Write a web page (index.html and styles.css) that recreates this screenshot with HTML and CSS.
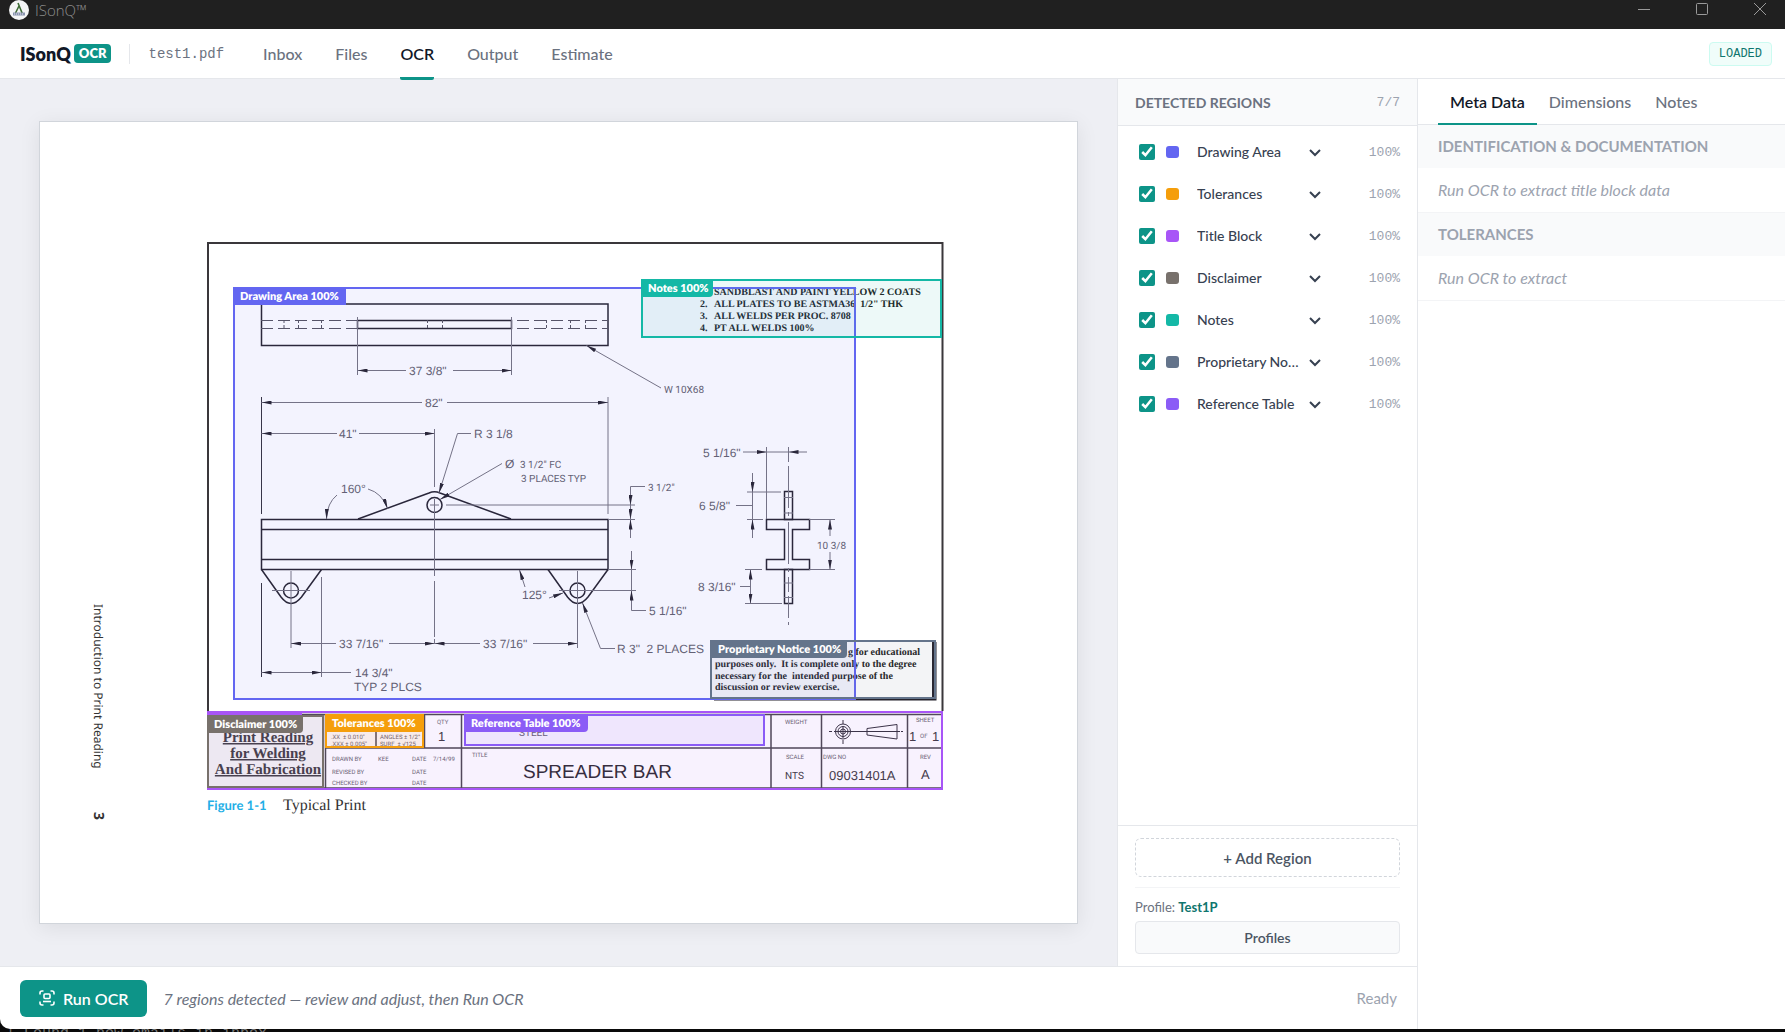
FILE: index.html
```html
<!DOCTYPE html>
<html lang="en">
<head>
  <meta charset="UTF-8" />
  <meta name="viewport" content="width=device-width, initial-scale=1.0"/>
  <title>ISonQ™</title>
  <link rel="stylesheet" href="styles.css">
</head>
<body>
  <div class="window">
    <div class="titlebar">
      <svg class="app-icon" viewBox="0 0 20 20" aria-hidden="true">
        <circle cx="10" cy="10" r="10" fill="#f4f5f6"/>
        <path d="M9 3l4.500 11M10 6L6.500 13" stroke="#3d6b35" stroke-width="1.600" fill="none"/>
        <path d="M4 12.500h12v3H4z" fill="#8b95b0"/>
        <path d="M5 14h10" stroke="#dfe3ec" stroke-dasharray="1 1"/>
      </svg>
      <span class="app-name">ISonQ™</span>
      <div class="window-controls">
        <button aria-label="Minimize"><svg viewBox="0 0 14 14"><path d="M1 7.500h12"/></svg></button>
        <button aria-label="Maximize"><svg viewBox="0 0 14 14"><rect x="1.500" y="1.500" width="11" height="11" rx="1"/></svg></button>
        <button aria-label="Close"><svg viewBox="0 0 14 14"><path d="M1 1l12 12M13 1L1 13"/></svg></button>
      </div>
    </div>

    <header class="header">
      <div class="brand">ISonQ<span class="brand-tag">OCR</span></div>
      <span class="file-name">test1.pdf</span>
      <nav class="nav">
        <a href="#inbox">Inbox</a>
        <a href="#files">Files</a>
        <a href="#ocr" class="active">OCR</a>
        <a href="#output">Output</a>
        <a href="#estimate">Estimate</a>
      </nav>
      <span class="status-badge">LOADED</span>
    </header>

    <div class="body">
      <div class="workspace">
        <div class="work-top">
          <main class="canvas">
            <div class="page">
              <svg class="drawing" viewBox="40 122 1037 801" role="img" aria-label="Spreader bar drawing with detected regions">
                <defs>
                  <marker id="arrow" viewBox="0 0 10 4" refX="10" refY="2" markerWidth="10" markerHeight="4" markerUnits="userSpaceOnUse" orient="auto-start-reverse">
                    <path d="M0 0L10 2L0 4z" fill="#25222c"/>
                  </marker>
                </defs>

                <!-- sheet border -->
                <path class="frame" d="M208 711V243H942.500V711"/>

                <!-- top view -->
                <g class="solid">
                  <rect x="261.500" y="304" width="346.500" height="41.500"/>
                  <rect x="357.500" y="320.500" width="154" height="8"/>
                </g>
                <g class="hidden-line">
                  <path d="M261 320.500H357M261 328.500H357M517 320.500H608M517 328.500H608"/>
                </g>
                <path class="short-dash" d="M284 320V329M298.500 320V329M321.500 320V329M427.500 320V329M442.500 320V329M546.500 320V329M570.500 320V329M585.500 320V329"/>

                <!-- front view -->
                <g class="solid">
                  <rect x="261.500" y="519.500" width="346.500" height="50"/>
                  <path d="M261 529.500H608M261 559.500H608"/>
                  <path d="M358 519L429 493Q434.500 490.500 440 493L511 519"/>
                  <path d="M261.500 569.500L281 597Q291 610 301.500 597L321.500 569.500"/>
                  <path d="M548 569.500L567.500 597Q577.500 610 588 597L608 569.500"/>
                  <circle cx="434.500" cy="505" r="7.500"/>
                  <circle cx="291" cy="590.500" r="7.500"/>
                  <circle cx="577.500" cy="590.500" r="7.500"/>
                </g>
                <g class="thin">
                  <path d="M357.500 317V375M511.500 317V375"/>
                  <path class="dark" d="M261.500 397V514M261.500 583V677"/>
                  <path d="M608 397V514M434.500 429V487M434.500 499V576M434.500 581V637M434.500 639V644"/>
                  <path d="M430 505H439M446 505H635M608 519.500H635M608 569.500H636"/>
                  <path d="M272 590.500H310M291 571V648M559 590.500H636M577.500 571V648M321.500 577V677"/>
                </g>

                <!-- section view -->
                <g class="solid">
                  <path d="M766.500 519.500H809.500V529.500H792.500V559.500H809.500V569.500H766.500V559.500H784.500V529.500H766.500z"/>
                  <rect x="784.500" y="491.500" width="8" height="28"/>
                  <rect x="784.500" y="569.500" width="8" height="34"/>
                </g>
                <g class="thin">
                  <path d="M784 497.500H793M784 513H793M784 583H793M784 597.500H793"/>
                  <path d="M788.500 447V462M788.500 466V508M788.500 512V516M788.500 522V564M788.500 568V572M788.500 577V592M788.500 596V618M788.500 622V625"/>
                  <path d="M766.500 447V519M747 492H781M747 519.500H763M809 519.500H835M809 569.500H835M745 569.500H762M745 603.500H782"/>
                </g>

                <!-- dimension lines -->
                <g class="dim">
                  <path d="M406 370.500H357.500"/>
                  <path d="M453 370.500H511.500"/>
                  <path d="M422 402.500H261.500"/>
                  <path d="M447 402.500H608"/>
                  <path d="M337 433.500H261.500"/>
                  <path d="M359 433.500H434.500"/>
                  <path d="M471 433.500H457.500L439 493"/>
                  <path d="M502 463.500L440 499.500"/>
                  <path d="M368 489Q382 493 387.500 508.500"/>
                  <path d="M337 495Q327 503 326.500 519"/>
                  <path d="M661 388L586.500 345.500"/>
                  <path d="M645 486.500H630.500V505"/>
                  <path d="M630.500 505V519"/>
                  <path d="M630.500 538V519.500"/>
                  <path d="M631.500 551V569.500"/>
                  <path d="M646 610.500H631.500V590.500"/>
                  <path d="M525 587L519.500 570"/>
                  <path d="M549 598L563 593"/>
                  <path d="M615 648.500H600.500L582.500 603"/>
                  <path d="M336 643.500H291"/>
                  <path d="M389 643.500H434.500"/>
                  <path d="M480 643.500H434.500"/>
                  <path d="M533 643.500H577.500"/>
                  <path d="M351 672.500H261.500"/>
                  <path d="M300 672.500H321.500"/>
                  <path d="M743 452H766.500"/>
                  <path d="M807 452H788.500"/>
                  <path d="M752.500 473V492"/>
                  <path d="M752.500 538V519.500"/>
                  <path d="M830 536V519.500"/>
                  <path d="M830 552V569.500"/>
                  <path d="M750.500 586V569.500"/>
                  <path d="M750.500 586V603.500"/>
                </g>
                <path class="thin" d="M766 452H789M736 505.500H752.500M752.500 492V520M740 586.500H750.500M631.500 569V591"/>

                <!-- dimension text -->
                <g class="dim-text">
                  <text x="409" y="375">37 3/8"</text>
                  <text x="425" y="407">82"</text>
                  <text x="339" y="438">41"</text>
                  <text x="474" y="438">R 3 1/8</text>
                  <text x="505" y="468">Ø</text>
                  <text x="341" y="493">160°</text>
                  <text x="522" y="599">125°</text>
                  <text x="339" y="648">33 7/16"</text>
                  <text x="483" y="648">33 7/16"</text>
                  <text x="355" y="677">14 3/4"</text>
                  <text x="354" y="691">TYP 2 PLCS</text>
                  <text x="617" y="653">R 3"&#160; 2 PLACES</text>
                  <text x="649" y="615">5 1/16"</text>
                  <text x="703" y="457">5 1/16"</text>
                  <text x="699" y="510">6 5/8"</text>
                  <text x="698" y="591">8 3/16"</text>
                </g>
                <g class="dim-text narrow">
                  <text x="520" y="468">3 1/2" FC</text>
                  <text x="521" y="482">3 PLACES TYP</text>
                  <text x="664" y="393">W 10X68</text>
                  <text x="648" y="491">3 1/2"</text>
                  <text x="817" y="549">10 3/8</text>
                </g>

                <!-- general notes -->
                <g class="note-text">
                  <text x="714" y="295">SANDBLAST AND PAINT YELLOW 2 COATS</text>
                  <text x="700" y="307">2.</text><text x="714" y="307">ALL PLATES TO BE ASTMA36&#160; 1/2" THK</text>
                  <text x="700" y="319">3.</text><text x="714" y="319">ALL WELDS PER PROC. 8708</text>
                  <text x="700" y="331">4.</text><text x="714" y="331">PT ALL WELDS 100%</text>
                </g>

                <!-- proprietary notice -->
                <path class="notice-shadow" d="M714 699H935V642"/>
                <path class="notice-edge" d="M933 642V697"/>
                <g class="note-text">
                  <text x="848" y="655">g for educational</text>
                  <text x="715" y="667">purposes only.&#160; It is complete only to the degree</text>
                  <text x="715" y="679">necessary for the&#160; intended purpose of the</text>
                  <text x="715" y="690">discussion or review exercise.</text>
                </g>

                <!-- title block -->
                <path class="table-line" d="M208 714.500H942M325 748H942M208 788H942M325.500 714V788M424.500 714V748M461.500 714V788M771 714V788M821.500 714V788M907.500 714V788M376 731V747"/>
                <g class="course">
                  <text x="268" y="742">Print Reading</text>
                  <text x="268" y="758">for Welding</text>
                  <text x="268" y="774">And Fabrication</text>
                </g>
                <g class="tiny">
                  <text x="331" y="739">.XX&#160; ± 0.010"</text>
                  <text x="331" y="746">.XXX ± 0.005"</text>
                  <text x="380" y="739">ANGLES ± 1/2°</text>
                  <text x="380" y="746">SURF&#160; ± √125</text>
                  <text x="437" y="724">QTY</text>
                  <text x="332" y="761">DRAWN BY</text>
                  <text x="378" y="761">KEE</text>
                  <text x="412" y="761">DATE</text>
                  <text x="433" y="761">7/14/99</text>
                  <text x="332" y="774">REVISED BY</text>
                  <text x="412" y="774">DATE</text>
                  <text x="332" y="785">CHECKED BY</text>
                  <text x="412" y="785">DATE</text>
                  <text x="472" y="757">TITLE</text>
                  <text x="785" y="724">WEIGHT</text>
                  <text x="786" y="759">SCALE</text>
                  <text x="823" y="759">DWG NO</text>
                  <text x="920" y="759">REV</text>
                  <text x="916" y="722">SHEET</text>
                  <text x="920" y="738">OF</text>
                </g>
                <g class="table-text">
                  <text x="438" y="741">1</text>
                  <text x="909" y="741">1</text>
                  <text x="932" y="741">1</text>
                  <text x="829" y="780">09031401A</text>
                  <text x="921" y="779">A</text>
                </g>
                <text class="dim-text narrow" x="519" y="736">STEEL</text>
                <text class="nts" x="785" y="779">NTS</text>
                <text class="part-name" x="523" y="778">SPREADER BAR</text>
                <g class="thin dark">
                  <circle cx="843" cy="731.500" r="7.500"/>
                  <circle cx="843" cy="731.500" r="5"/>
                  <circle cx="843" cy="731.500" r="2.500"/>
                  <path d="M829 731.500H832M834 731.500H900M901 731.500H903M843 720V724M843 726V738M843 740V744"/>
                  <path d="M867 728.500L897 724.500V739L867 735z"/>
                </g>

                <!-- captions -->
                <text class="figure-no" x="207" y="810">Figure 1-1</text>
                <text class="figure-name" x="283" y="810">Typical Print</text>
                <g transform="translate(94 604) rotate(90)">
                  <text class="side-title">Introduction to Print Reading</text>
                  <text class="side-page" x="208">3</text>
                </g>

                <!-- detected regions -->
                <g class="region drawing-area">
                  <rect class="region-box" x="234" y="288" width="621" height="411"/>
                  <path class="region-tab" d="M233 287h113v18h-113z"/>
                  <text x="240" y="300">Drawing Area 100%</text>
                </g>
                <g class="region title-block">
                  <rect class="region-box" x="208" y="712" width="734" height="77"/>
                  <path class="region-tab" d="M207 711h95v14h-95z"/>
                </g>
                <g class="region tolerances">
                  <rect class="region-box" x="326" y="715" width="97" height="32"/>
                  <path class="region-tab" d="M325 714h99v14a4 4 0 0 1-4 4h-95z"/>
                  <text x="332" y="727">Tolerances 100%</text>
                </g>
                <g class="region disclaimer">
                  <rect class="region-box" x="208" y="716" width="115" height="71"/>
                  <path class="region-tab" d="M207 715h96v14a4 4 0 0 1-4 4h-92z"/>
                  <text x="214" y="728">Disclaimer 100%</text>
                </g>
                <g class="region notes">
                  <rect class="region-box" x="642" y="280" width="299" height="57"/>
                  <path class="region-tab" d="M641 279h72v14a4 4 0 0 1-4 4h-68z"/>
                  <text x="648" y="292">Notes 100%</text>
                </g>
                <g class="region proprietary">
                  <rect class="region-box" x="711" y="641" width="224" height="57"/>
                  <path class="region-tab" d="M710 640h137v14a4 4 0 0 1-4 4h-133z"/>
                  <text x="718" y="653">Proprietary Notice 100%</text>
                </g>
                <g class="region reference">
                  <rect class="region-box" x="465" y="715" width="299" height="30"/>
                  <path class="region-tab" d="M464 714h124v14a4 4 0 0 1-4 4h-120z"/>
                  <text x="471" y="727">Reference Table 100%</text>
                </g>
              </svg>
            </div>
          </main>

          <aside class="regions">
            <div class="regions-head">
              <h2>Detected Regions</h2>
              <span class="mono">7/7</span>
            </div>
            <ul class="region-list">
              <li>
                <input type="checkbox" aria-label="Show Drawing Area" checked>
                <span class="swatch drawing-area"></span>
                <span class="type"><select aria-label="Region 1 type"><option>Drawing Area</option></select><svg viewBox="0 0 12 12"><path d="M1 4l5 5 5-5"/></svg></span>
                <span class="mono">100%</span>
              </li>
              <li>
                <input type="checkbox" aria-label="Show Tolerances" checked>
                <span class="swatch tolerances"></span>
                <span class="type"><select aria-label="Region 2 type"><option>Tolerances</option></select><svg viewBox="0 0 12 12"><path d="M1 4l5 5 5-5"/></svg></span>
                <span class="mono">100%</span>
              </li>
              <li>
                <input type="checkbox" aria-label="Show Title Block" checked>
                <span class="swatch title-block"></span>
                <span class="type"><select aria-label="Region 3 type"><option>Title Block</option></select><svg viewBox="0 0 12 12"><path d="M1 4l5 5 5-5"/></svg></span>
                <span class="mono">100%</span>
              </li>
              <li>
                <input type="checkbox" aria-label="Show Disclaimer" checked>
                <span class="swatch disclaimer"></span>
                <span class="type"><select aria-label="Region 4 type"><option>Disclaimer</option></select><svg viewBox="0 0 12 12"><path d="M1 4l5 5 5-5"/></svg></span>
                <span class="mono">100%</span>
              </li>
              <li>
                <input type="checkbox" aria-label="Show Notes" checked>
                <span class="swatch notes"></span>
                <span class="type"><select aria-label="Region 5 type"><option>Notes</option></select><svg viewBox="0 0 12 12"><path d="M1 4l5 5 5-5"/></svg></span>
                <span class="mono">100%</span>
              </li>
              <li>
                <input type="checkbox" aria-label="Show Proprietary Notice" checked>
                <span class="swatch proprietary"></span>
                <span class="type"><select aria-label="Region 6 type"><option>Proprietary Notice</option></select><svg viewBox="0 0 12 12"><path d="M1 4l5 5 5-5"/></svg></span>
                <span class="mono">100%</span>
              </li>
              <li>
                <input type="checkbox" aria-label="Show Reference Table" checked>
                <span class="swatch reference"></span>
                <span class="type"><select aria-label="Region 7 type"><option>Reference Table</option></select><svg viewBox="0 0 12 12"><path d="M1 4l5 5 5-5"/></svg></span>
                <span class="mono">100%</span>
              </li>
            </ul>
            <div class="regions-foot">
              <button class="add-region">+ Add Region</button>
              <div class="profile">
                <p>Profile: <strong>Test1P</strong></p>
                <button class="profiles">Profiles</button>
              </div>
            </div>
          </aside>
        </div>

        <footer class="footer">
          <button class="run">
            <svg viewBox="0 0 16 16" aria-hidden="true">
              <path d="M1 4.500V3a2 2 0 0 1 2-2h1.500M11.500 1H13a2 2 0 0 1 2 2v1.500M15 11.500V13a2 2 0 0 1-2 2h-1.500M4.500 15H3a2 2 0 0 1-2-2v-1.500"/>
              <rect x="5" y="4" width="6" height="4.500" rx="1"/>
              <path d="M4 11.500h8"/>
            </svg>
            Run OCR
          </button>
          <span class="hint">7 regions detected — review and adjust, then Run OCR</span>
          <span class="ready">Ready</span>
        </footer>
      </div>

      <aside class="details">
        <div class="tabs" role="tablist">
          <button role="tab" aria-selected="true" class="active">Meta Data</button>
          <button role="tab" aria-selected="false">Dimensions</button>
          <button role="tab" aria-selected="false">Notes</button>
        </div>
        <section>
          <h3>Identification &amp; Documentation</h3>
          <p>Run OCR to extract title block data</p>
        </section>
        <section>
          <h3>Tolerances</h3>
          <p>Run OCR to extract</p>
        </section>
      </aside>
    </div>
  </div>
  <div class="console">! Found 1 new emails in inbox</div>
</body>
</html>
```
FILE: styles.css
```css
* {
  box-sizing: border-box;
  margin: 0;
  padding: 0;
}

body {
  display: flex;
  flex-direction: column;
  height: 100vh;
  overflow: hidden;
  background-color: #0a0a0a;
  color: #374151;
  font-family: Lato, sans-serif;
  font-size: 14px;
}

button,
select {
  font: inherit;
  color: inherit;
  background: none;
  border: none;
  cursor: pointer;
}

.window {
  flex: 1;
  min-height: 0;
  display: flex;
  flex-direction: column;
  background-color: #fff;
  border-bottom-left-radius: 10px;
  overflow: hidden;
}

.console {
  height: 3px;
  padding-left: 6px;
  overflow: hidden;
  color: #777;
  font-family: "Liberation Mono", monospace;
  font-size: 15px;
  line-height: 10px;
}

/* title bar */
.titlebar {
  display: flex;
  align-items: flex-start;
  height: 29px;
  padding-left: 9px;
  background-color: #202020;
  color: #8c8c8c;
}

.app-icon {
  width: 20px;
  height: 20px;
  margin-right: 6px;
}

.app-name {
  font-family: "Open Sans", sans-serif;
  font-size: 15px;
  font-weight: 300;
  line-height: 20px;
}

.window-controls {
  display: flex;
  gap: 8px;
  margin-left: auto;
}

.window-controls button {
  width: 50px;
  height: 20px;
}

.window-controls svg {
  width: 14px;
  height: 14px;
  fill: none;
  stroke: #9a9a9a;
}

/* header, kept above the canvas so the active tab can overlap its border */
.header {
  position: relative;
  z-index: 1;
  display: flex;
  align-items: center;
  height: 50px;
  padding: 0 13px 0 20px;
  border-bottom: 1px solid #e5e7eb;
}

.brand {
  display: flex;
  align-items: center;
  gap: 3px;
  padding-right: 18px;
  color: #111827;
  font-size: 18px;
  font-weight: 800;
}

.brand-tag {
  padding: 0 5px;
  border-radius: 4px;
  background-color: #0d9488;
  color: #fff;
  font-size: 13px;
  line-height: 19px;
}

.file-name {
  padding: 0 39px 0 18px;
  border-left: 1px solid #e5e7eb;
  color: #6b7280;
  font-family: "Liberation Mono", monospace;
  font-size: 14px;
  line-height: 20px;
}

.nav {
  display: flex;
  align-self: stretch;
  gap: 33px;
}

.nav a {
  height: 51px;
  color: #6b7280;
  font-size: 16px;
  font-weight: 500;
  line-height: 50px;
  text-decoration: none;
}

.nav a.active {
  border-bottom: 3px solid #0d9488;
  border-radius: 2px;
  color: #111827;
  font-weight: 600;
}

.status-badge {
  margin-left: auto;
  padding: 0 9px;
  border: 1px solid #ccfbf1;
  border-radius: 4px;
  background-color: #f0fdfa;
  color: #0f766e;
  font-family: "Liberation Mono", monospace;
  font-size: 12px;
  line-height: 22px;
}

/* layout */
.body {
  flex: 1;
  min-height: 0;
  display: flex;
}

.workspace {
  flex: 1;
  min-width: 0;
  display: flex;
  flex-direction: column;
}

.work-top {
  flex: 1;
  min-height: 0;
  display: flex;
}

.canvas {
  flex: 1;
  min-width: 0;
  padding: 42px 39px;
  background-color: #eeeff4;
  overflow: hidden;
}

.page {
  border: 1px solid #d1d5db;
  background-color: #fff;
  box-shadow: 0 4px 20px rgba(0, 0, 0, 0.08);
}

.drawing {
  display: block;
  width: 100%;
}

/* drawing */
.drawing text {
  text-rendering: geometricPrecision;
}

.frame,
.solid,
.thin,
.dim,
.hidden-line,
.short-dash,
.table-line,
.notice-shadow,
.notice-edge {
  fill: none;
  stroke: #25222c;
}

.frame {
  stroke: #3a373b;
  stroke-width: 2;
}

.solid {
  stroke-width: 1.5;
}

.thin,
.dim {
  stroke: #76747e;
}

.dark {
  stroke: #34313b;
}

.dim path {
  marker-end: url(#arrow);
}

.hidden-line {
  stroke: #55535e;
  stroke-dasharray: 12 5;
}

.short-dash {
  stroke: #55535e;
  stroke-dasharray: 3 2;
}

.table-line {
  stroke: #4a474e;
  stroke-width: 1.5;
}

.notice-shadow {
  stroke-width: 3;
}

.notice-edge {
  stroke-width: 2;
}

.dim-text {
  fill: #63616b;
  font-family: "Liberation Sans", sans-serif;
  font-size: 12px;
}

.dim-text.narrow {
  font-family: Roboto, sans-serif;
  font-size: 10px;
}

.note-text {
  fill: #222;
  font-family: "Liberation Serif", serif;
  font-size: 10px;
  font-weight: bold;
}

.course {
  fill: #3d3a40;
  font-family: "Liberation Serif", serif;
  font-size: 15px;
  font-weight: bold;
  text-anchor: middle;
  text-decoration: underline;
}

.tiny {
  fill: #66636b;
  font-family: Roboto, sans-serif;
  font-size: 6px;
}

.table-text {
  fill: #3d3a40;
  font-family: "Liberation Sans", sans-serif;
  font-size: 13px;
}

.nts {
  fill: #3d3a40;
  font-family: Roboto, sans-serif;
  font-size: 10px;
}

.part-name {
  fill: #2d2a30;
  font-family: "Liberation Sans", sans-serif;
  font-size: 19px;
}

.figure-no {
  fill: #22aee6;
  font-size: 13px;
  font-weight: bold;
}

.figure-name {
  fill: #333;
  font-family: "Liberation Serif", serif;
  font-size: 16px;
}

.side-title,
.side-page {
  fill: #333;
  font-family: "Noto Sans", sans-serif;
  font-size: 12px;
}

.side-page {
  font-size: 14px;
  font-weight: bold;
}

/* region colours, shared by the drawing and the list */
.drawing-area {
  --region: #6366f1;
}

.tolerances {
  --region: #f59e0b;
}

.title-block {
  --region: #a855f7;
}

.disclaimer {
  --region: #78716c;
}

.notes {
  --region: #14b8a6;
}

.proprietary {
  --region: #64748b;
}

.reference {
  --region: #8b5cf6;
}

.region-box {
  fill: var(--region);
  fill-opacity: 0.08;
  stroke: var(--region);
  stroke-width: 2;
}

.region-tab {
  fill: var(--region);
}

.region text {
  fill: #fff;
  font-size: 11px;
  font-weight: 800;
}

/* detected regions */
.regions {
  width: 300px;
  display: flex;
  flex-direction: column;
  border-left: 1px solid #e5e7eb;
}

.regions-head {
  display: flex;
  align-items: center;
  justify-content: space-between;
  height: 47px;
  padding: 0 17px;
  border-bottom: 1px solid #e5e7eb;
  background-color: #f9fafb;
}

.regions-head h2 {
  color: #6b7280;
  font-size: 14px;
  font-weight: 700;
  text-transform: uppercase;
}

.mono {
  color: #9ca3af;
  font-family: "Liberation Mono", monospace;
  font-size: 13px;
}

.region-list {
  flex: 1;
  padding-top: 5px;
  list-style: none;
}

.region-list li {
  display: flex;
  align-items: center;
  height: 42px;
  padding: 0 17px 0 21px;
}

.region-list input {
  width: 16px;
  height: 16px;
  accent-color: #0d9488;
}

.swatch {
  width: 13px;
  height: 12px;
  margin: 0 11px;
  border-radius: 3px;
  background-color: var(--region);
}

.type {
  display: grid;
  align-items: center;
  width: 131px;
}

.type select,
.type svg {
  grid-area: 1 / 1;
}

.type select {
  width: 100%;
  padding: 3px 16px 4px 7px;
  appearance: none;
  font-weight: 500;
  text-overflow: ellipsis;
}

.type svg {
  justify-self: end;
  width: 12px;
  height: 12px;
  fill: none;
  stroke: #374151;
  stroke-width: 2;
  pointer-events: none;
}

.region-list .mono {
  margin-left: auto;
}

.regions-foot {
  padding: 12px 17px;
  border-top: 1px solid #e5e7eb;
}

.regions-foot button {
  width: 100%;
  color: #4b5563;
  font-weight: 600;
}

.regions-foot .add-region {
  height: 39px;
  border: 1px dashed #d1d5db;
  border-radius: 6px;
  font-size: 15px;
}

.profile {
  margin-top: 10px;
  padding-top: 10px;
  border-top: 1px solid #f3f4f6;
}

.profile p {
  margin-bottom: 5px;
  color: #6b7280;
  font-size: 13px;
  line-height: 18px;
}

.profile strong {
  color: #0f766e;
}

.regions-foot .profiles {
  height: 33px;
  border: 1px solid #e5e7eb;
  border-radius: 4px;
  background-color: #f9fafb;
}

/* footer */
.footer {
  display: flex;
  align-items: center;
  height: 63px;
  padding: 0 20px;
  border-top: 1px solid #e5e7eb;
}

.run {
  display: flex;
  align-items: center;
  gap: 8px;
  height: 37px;
  padding: 0 19px;
  border-radius: 6px;
  background-color: #0d9488;
  color: #fff;
  font-size: 16px;
  font-weight: 600;
}

.run svg {
  width: 16px;
  height: 16px;
  fill: none;
  stroke: #fff;
  stroke-width: 1.6;
}

.hint {
  margin-left: 16px;
  color: #6b7280;
  font-size: 16px;
  font-style: italic;
}

.ready {
  margin-left: auto;
  color: #9ca3af;
  font-size: 15px;
}

/* meta data panel */
.details {
  width: 368px;
  border-left: 1px solid #e5e7eb;
}

.tabs {
  display: flex;
  height: 46px;
  padding-left: 20px;
  border-bottom: 1px solid #e5e7eb;
}

.tabs button {
  height: 46px;
  padding: 0 12px;
  border-bottom: 2px solid transparent;
  color: #6b7280;
  font-size: 16px;
  font-weight: 500;
}

.tabs button.active {
  border-bottom-color: #0d9488;
  color: #111827;
  font-weight: 600;
}

.details section {
  border-bottom: 1px solid #f3f4f6;
}

.details h3 {
  padding: 0 20px;
  background-color: #f9fafb;
  color: #9ca3af;
  font-size: 15px;
  font-weight: 700;
  line-height: 43px;
  text-transform: uppercase;
}

.details p {
  padding: 0 20px;
  color: #9ca3af;
  font-size: 16px;
  font-style: italic;
  line-height: 44px;
}
```
